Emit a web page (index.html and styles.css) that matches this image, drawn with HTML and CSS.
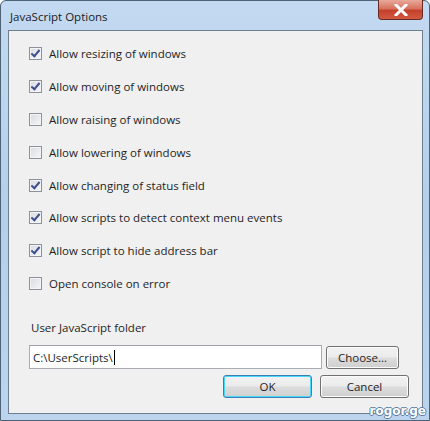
FILE: index.html
```html
<!DOCTYPE html>
<html lang="en">
<head>
    <meta charset="UTF-8">
    <title>JavaScript Options</title>
    <link rel="stylesheet" href="styles.css">
</head>
<body>
    <div class="window">
        <div class="titlebar">
            <span class="title">JavaScript Options</span>
            <button class="close">
                <svg width="14" height="12" viewBox="0 0 14 12"><path d="M2 1 L12 11 M12 1 L2 11" stroke="#fff" stroke-width="3" stroke-linecap="square"/></svg>
            </button>
        </div>
        <div class="panel">
            <div class="options">
                <label class="option"><span class="box checked"></span>Allow resizing of windows</label>
                <label class="option"><span class="box checked"></span>Allow moving of windows</label>
                <label class="option"><span class="box"></span>Allow raising of windows</label>
                <label class="option"><span class="box"></span>Allow lowering of windows</label>
                <label class="option"><span class="box checked"></span>Allow changing of status field</label>
                <label class="option"><span class="box checked"></span>Allow scripts to detect context menu events</label>
                <label class="option"><span class="box checked"></span>Allow script to hide address bar</label>
                <label class="option"><span class="box"></span>Open console on error</label>
            </div>
            <div class="folder-label">User JavaScript folder</div>
            <div class="folder-row">
                <div class="field">C:\UserScripts\<span class="caret"></span></div>
                <button class="btn choose">Choose...</button>
            </div>
            <div class="actions">
                <button class="btn ok">OK</button>
                <button class="btn cancel">Cancel</button>
            </div>
        </div>
        <div class="watermark">rogor.ge</div>
    </div>
</body>
</html>
```

FILE: styles.css
```css
body {
    margin: 0;
    font-family: "Open Sans", "DejaVu Sans", sans-serif;
    font-size: 11.5px;
    color: #1e1e1e;
    background: #fff;
}
.window {
    position: relative;
    width: 430px;
    height: 421px;
    box-sizing: border-box;
    border: 1px solid #4d6275;
    border-radius: 6px 6px 0 0;
    background: linear-gradient(to bottom, #c2d9f1 0%, #b6cfe9 50%, #bcd4ee 100%);
    padding: 0 6px 6px 7px;
    display: flex;
    flex-direction: column;
}
.titlebar {
    height: 29px;
    display: flex;
    align-items: center;
    justify-content: space-between;
}
.title {
    margin-left: 2px;
    margin-top: 1px;
    color: #1b1b1b;
}
.close {
    align-self: flex-start;
    margin-top: -1px;
    margin-right: 0;
    width: 45px;
    height: 20px;
    border: 1px solid #6a2a24;
    border-top: none;
    border-radius: 0 0 4px 4px;
    background: linear-gradient(to bottom, #e9a99b 0%, #d7735f 45%, #c4412b 55%, #d25a42 100%);
    display: flex;
    align-items: center;
    justify-content: center;
    padding: 0;
}
.panel {
    flex: 1;
    background: #f0f0f0;
    border: 1px solid #6f7f8f;
    padding: 6px 13px 10px 20px;
    display: flex;
    flex-direction: column;
}
.options {
    display: flex;
    flex-direction: column;
}
.option {
    height: 32.9px;
    display: flex;
    align-items: center;
    gap: 7px;
    color: #1e1e1e;
}
.box {
    width: 11px;
    height: 11px;
    border: 1px solid #8e919a;
    background: linear-gradient(135deg, #d8dbe2 0%, #f6f6f8 100%);
    box-shadow: inset 0 0 0 1px #f4f4f6;
    position: relative;
}
.box.checked::after {
    content: "";
    position: absolute;
    left: 3px;
    top: 0px;
    width: 3px;
    height: 7px;
    border: solid #3d4f8c;
    border-width: 0 2px 2px 0;
    transform: rotate(40deg);
}
.folder-label {
    margin-top: 20px;
    margin-left: 2px;
    height: 20px;
}
.folder-row {
    display: flex;
    align-items: center;
    gap: 4px;
    margin-top: 5px;
}
.field {
    width: 288px;
    height: 22px;
    border: 1px solid #abadb3;
    border-top-color: #9da0a6;
    background: #fff;
    padding-left: 3px;
    display: flex;
    align-items: center;
}
.caret {
    display: inline-block;
    width: 1px;
    height: 15px;
    background: #000;
    margin-left: 1px;
}
.btn {
    font-family: inherit;
    font-size: 11.5px;
    color: #1e1e1e;
    border: 1px solid #707070;
    border-radius: 3px;
    background: linear-gradient(to bottom, #f2f2f2 0%, #ebebeb 48%, #dddddd 52%, #cfcfcf 100%);
    box-shadow: inset 0 0 0 1px #fcfcfc;
    padding: 0;
}
.choose {
    width: 73px;
    height: 23px;
}
.actions {
    display: flex;
    justify-content: flex-end;
    gap: 8px;
    margin-top: 6px;
}
.ok {
    width: 89px;
    height: 23px;
    border-color: #3c7fb1;
    box-shadow: inset 0 0 0 1px #48d8fb;
}
.cancel {
    width: 89px;
    height: 23px;
}
.watermark {
    position: absolute;
    right: 3px;
    bottom: 2px;
    font-family: "DejaVu Sans", sans-serif;
    font-weight: bold;
    font-size: 12px;
    color: #fff;
    text-shadow: 1px 0 #5b7fa6, -1px 0 #5b7fa6, 0 1px #5b7fa6, 0 -1px #5b7fa6;
}
```
